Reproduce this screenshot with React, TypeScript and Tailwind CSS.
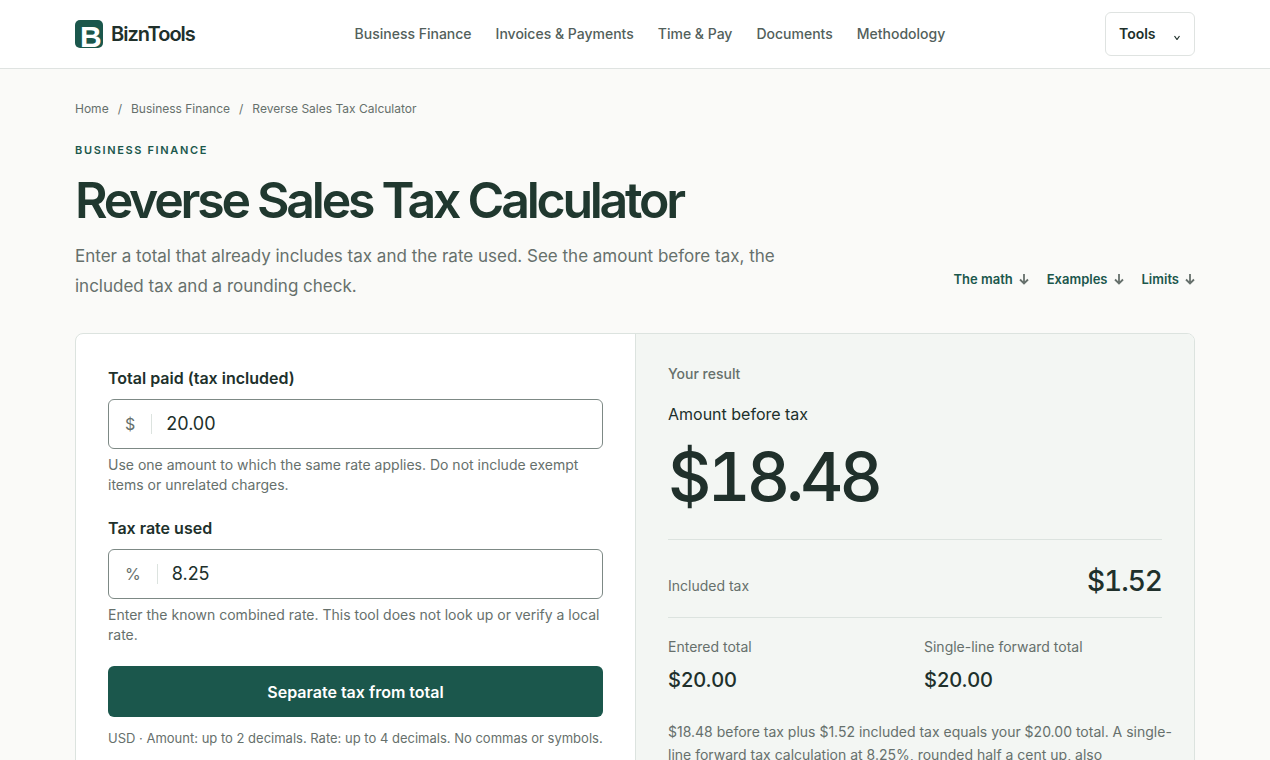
import React, { useState } from 'react';

interface IFieldProps {
  id: string;
  label: string;
  symbol: string;
  value: string;
  hint: string;
  onChange: (value: string) => void;
}

const navLinks = [
  { label: 'Business Finance', href: '#business-finance' },
  { label: 'Invoices & Payments', href: '#invoices' },
  { label: 'Time & Pay', href: '#time-pay' },
  { label: 'Documents', href: '#documents' },
  { label: 'Methodology', href: '#methodology' },
];

const jumpLinks = [
  { label: 'The math', href: '#math' },
  { label: 'Examples', href: '#examples' },
  { label: 'Limits', href: '#limits' },
];

const Logo: React.FC = () => (
  <svg viewBox="0 0 28 28" className="size-7 font-['Liberation_Sans',sans-serif] tracking-normal" aria-hidden="true">
    <rect width="28" height="28" rx="5" fill="#1b574c" />
    <text x="5" y="27" fontSize="30" fontWeight="700" fill="#fff">
      B
    </text>
  </svg>
);

const ArrowDown: React.FC = () => (
  <svg viewBox="0 0 10 12" className="h-3 w-2.5" fill="none" stroke="#66706c" strokeWidth="1.8" aria-hidden="true">
    <path d="M5 1v9.500M1 6.500l4 4 4-4" />
  </svg>
);

const AmountField: React.FC<IFieldProps> = ({ id, label, symbol, value, hint, onChange }) => (
  <div>
    <label htmlFor={id} className="block text-base leading-[25px] font-semibold">
      {label}
    </label>
    <div className="mt-2 flex h-[50px] items-center rounded-md border border-[#7d8985] bg-white pl-4">
      <span className="border-r border-[#dce3df] pr-4 text-base leading-5 text-[#66706c]">{symbol}</span>
      <input
        id={id}
        type="text"
        inputMode="decimal"
        value={value}
        onChange={(e) => onChange(e.target.value)}
        className="min-w-0 flex-1 bg-transparent px-3.5 text-lg outline-none"
      />
    </div>
    <p className="mt-1.5 text-sm leading-5 text-[#66706c]">{hint}</p>
  </div>
);

const App: React.FC = () => {
  const [total, setTotal] = useState('20.00');
  const [rate, setRate] = useState('8.25');

  return (
    <div className="min-h-screen bg-[#fafaf8] font-['Inter',sans-serif] text-[#20302b]">
      <header className="border-b border-[#dfe3e1] bg-white">
        <div className="mx-auto flex h-[68px] max-w-[1120px] items-center justify-between">
          <a href="#home" className="flex items-center gap-2 text-xl font-semibold tracking-tighter">
            <Logo />
            BiznTools
          </a>
          <nav className="flex gap-6 text-sm font-medium text-[#52605b]">
            {navLinks.map((link) => (
              <a key={link.label} href={link.href}>
                {link.label}
              </a>
            ))}
          </nav>
          <button className="flex h-11 w-[90px] items-center justify-between rounded-md border border-[#dfe3e1] px-[13px] text-sm font-semibold">
            Tools
            <svg viewBox="0 0 8 12" className="h-3 w-2" fill="none" stroke="currentColor" strokeWidth="1.2" aria-hidden="true">
              <path d="M1.500 8l2.500 3.500L6.500 8" />
            </svg>
          </button>
        </div>
      </header>

      <main className="mx-auto max-w-[1120px] pt-[30px]">
        <nav aria-label="Breadcrumb" className="flex gap-[9px] text-xs leading-5 text-[#66706c]">
          <a href="#home">Home</a>
          <span>/</span>
          <a href="#business-finance">Business Finance</a>
          <span>/</span>
          <span>Reverse Sales Tax Calculator</span>
        </nav>

        {/* Heading */}
        <div className="mt-[23px] flex items-end justify-between">
          <div>
            <p className="text-[11px] leading-4 font-semibold tracking-[0.15em] text-[#1b574c] uppercase">Business Finance</p>
            <h1 className="mt-3 text-[50px] leading-[60px] font-semibold tracking-[-0.065em] text-[#20382f]">
              Reverse Sales Tax Calculator
            </h1>
            <p className="mt-[11px] max-w-[720px] text-[17px] leading-[30px] text-[#66706c]">
              Enter a total that already includes tax and the rate used. See the amount before tax, the included tax and a
              rounding check.
            </p>
          </div>
          <nav className="flex gap-[18px] pb-3 text-[13px] leading-5 font-semibold text-[#1b574c]">
            {jumpLinks.map((link) => (
              <a key={link.label} href={link.href} className="flex items-center gap-1.5">
                {link.label}
                <ArrowDown />
              </a>
            ))}
          </nav>
        </div>

        {/* Calculator */}
        <section className="mt-8 grid grid-cols-2 overflow-hidden rounded-lg border border-[#dce3df] bg-white">
          <form className="p-8" onSubmit={(e) => e.preventDefault()}>
            <div className="flex flex-col gap-[21px]">
              <AmountField
                id="total"
                label="Total paid (tax included)"
                symbol="$"
                value={total}
                hint="Use one amount to which the same rate applies. Do not include exempt items or unrelated charges."
                onChange={setTotal}
              />
              <AmountField
                id="rate"
                label="Tax rate used"
                symbol="%"
                value={rate}
                hint="Enter the known combined rate. This tool does not look up or verify a local rate."
                onChange={setRate}
              />
              <button type="submit" className="h-[51px] rounded-md bg-[#1b574c] text-base font-semibold text-white">
                Separate tax from total
              </button>
            </div>
            <p className="mt-[11px] text-[13px] leading-5 text-[#66706c]">
              USD · Amount: up to 2 decimals. Rate: up to 4 decimals. No commas or symbols.
            </p>
          </form>

          <div className="border-l border-[#dce3df] bg-[#f3f6f3] p-8">
            <p className="text-sm leading-4 font-medium text-[#66706c]">Your result</p>
            <p className="mt-5 text-base leading-6">Amount before tax</p>
            <output
              htmlFor="total rate"
              className="mt-2 block text-[67px] leading-[85px] font-medium tracking-[-4px] tabular-nums"
            >
              $18.48
            </output>
            <div className="mt-5 flex items-baseline justify-between border-y border-[#dce3df] pt-[23px] pb-[18px]">
              <span className="text-sm text-[#66706c]">Included tax</span>
              <span className="text-[28px] leading-9 font-medium tracking-[-1px] tabular-nums">$1.52</span>
            </div>
            <dl className="mt-[18px] grid grid-cols-2 gap-x-[18px]">
              <div>
                <dt className="text-sm leading-[21px] text-[#66706c]">Entered total</dt>
                <dd className="mt-[9px] text-xl leading-7 font-medium">$20.00</dd>
              </div>
              <div>
                <dt className="text-sm leading-[21px] text-[#66706c]">Single-line forward total</dt>
                <dd className="mt-[9px] text-xl leading-7 font-medium">$20.00</dd>
              </div>
            </dl>
            <p className="-mr-3 mt-[26px] text-sm leading-[23px] text-[#66706c]">
              $18.48 before tax plus $1.52 included tax equals your $20.00 total. A single-line forward tax calculation at
              8.25%, rounded half a cent up, also reproduces $20.00.
            </p>
          </div>
        </section>
      </main>
    </div>
  );
};

export default App;
